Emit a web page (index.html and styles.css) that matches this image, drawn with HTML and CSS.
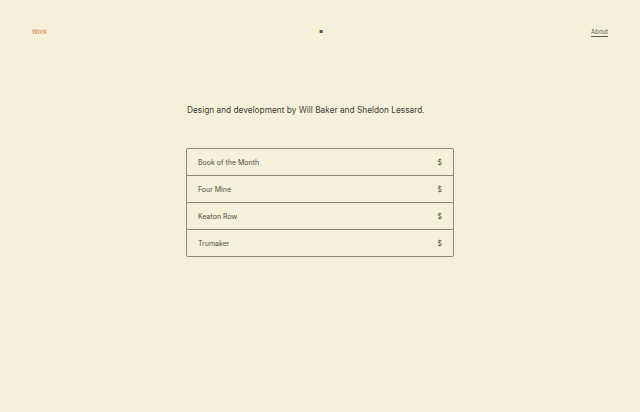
FILE: index.html
```html
<!DOCTYPE html>
<html>
<head>
<meta charset="utf-8">
<link rel="stylesheet" href="styles.css">
</head>
<body>
<header class="nav">
  <a class="nav-work" href="#">Work</a>
  <span class="nav-mark">■</span>
  <a class="nav-about" href="#">About</a>
</header>
<main class="main">
  <p class="intro">Design and development by Will Baker and Sheldon Lessard.</p>
  <ul class="list">
    <li class="row"><span>Book of the Month</span><span>$</span></li>
    <li class="row"><span>Four Mine</span><span>$</span></li>
    <li class="row"><span>Keaton Row</span><span>$</span></li>
    <li class="row"><span>Trumaker</span><span>$</span></li>
  </ul>
</main>
</body>
</html>
```
FILE: styles.css
```css
* { box-sizing: border-box; }
html, body { margin: 0; padding: 0; }
body {
  background: #f4f0da;
  font-family: Inter, Roboto, "Liberation Sans", sans-serif;
  color: #45453c;
  width: 640px;
  height: 412px;
}
.nav {
  display: flex;
  justify-content: space-between;
  align-items: center;
  padding: 27px 32px 0 32px;
  height: 36px;
  font-size: 6px;
}
.nav a { text-decoration: none; }
.nav-work { color: #e2773d; width: 40px; }
.nav-mark { color: #55554a; font-size: 4px; width: 40px; text-align: center; padding-left: 2px; }
.nav-about {
  color: #5c5c50;
  width: 40px;
  text-align: right;
  text-decoration: underline !important;
  text-underline-offset: 2px;
}
.main {
  width: 268px;
  margin: 69px auto 0 auto;
}
.intro {
  margin: 0 0 33px 1px;
  font-size: 8.3px;
  color: #3f3f37;
  white-space: nowrap;
}
.list {
  list-style: none;
  margin: 0;
  padding: 0;
  border: 1px solid #8c8b72;
  border-radius: 2px;
}
.row {
  display: flex;
  justify-content: space-between;
  align-items: center;
  height: 27px;
  padding: 0 11px;
  font-size: 7px;
  color: #4f4f45;
  border-top: 1px solid #8c8b72;
}
.row:first-child { border-top: none; height: 26px; }
```
